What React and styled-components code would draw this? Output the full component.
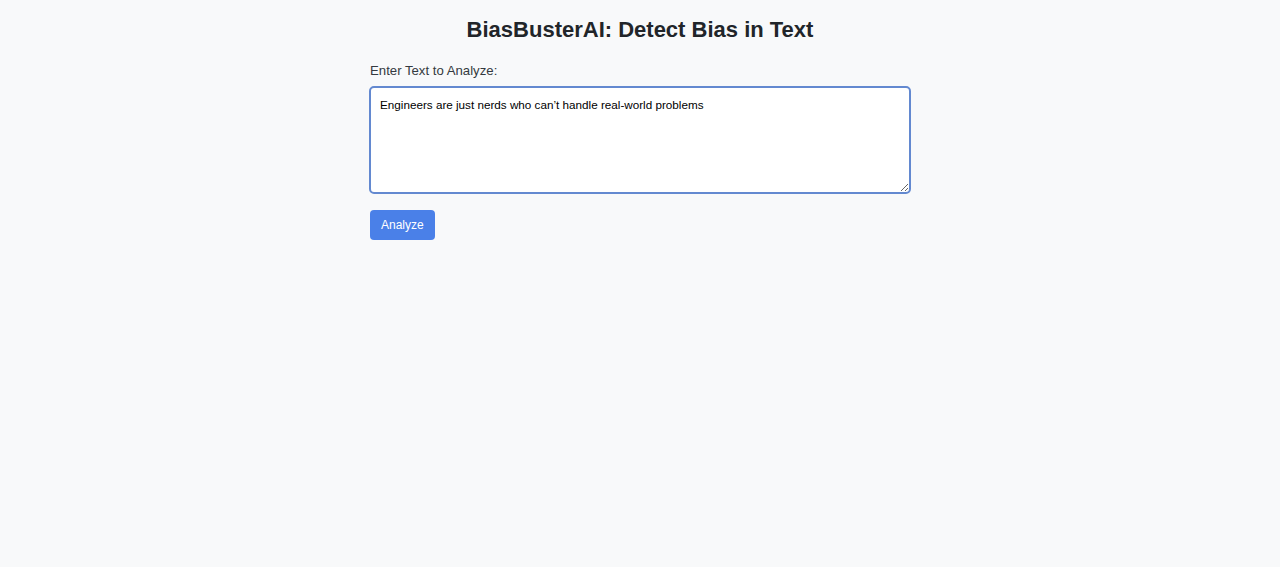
import React, { useState } from 'react';
import styled, { createGlobalStyle } from 'styled-components';

const GlobalStyle = createGlobalStyle`
    body {
        margin: 0;
        background: #f8f9fa;
        font-family: "Liberation Sans", Arial, sans-serif;
        color: #212529;
    }
`;

const Page = styled.div`
    display: flex;
    flex-direction: column;
    align-items: center;
    padding-top: 16px;
`;

const Title = styled.h1`
    margin: 0 0 19px;
    font-size: 22px;
    font-weight: bold;
    color: #212529;
    line-height: 28px;
`;

const Form = styled.div`
    width: 542px;
    display: flex;
    flex-direction: column;
    align-items: flex-start;
`;

const Label = styled.label`
    font-size: 13.2px;
    color: #343a40;
    margin-left: 1px;
    margin-bottom: 7px;
    line-height: 16px;
`;

const TextArea = styled.textarea`
    box-sizing: border-box;
    width: 542px;
    height: 108px;
    padding: 10px 9px;
    border: 2px solid #6389d0;
    border-radius: 5px;
    background: #fff;
    font-family: "Liberation Sans", Arial, sans-serif;
    font-size: 11.7px;
    color: #000;
    outline: none;
    resize: vertical;
`;

const Button = styled.button`
    margin-top: 16px;
    margin-left: 1px;
    padding: 0 11px;
    height: 30px;
    border: none;
    border-radius: 4px;
    background: ${props => (props.primary ? '#4a80e8' : '#6c757d')};
    color: #fff;
    font-family: "Liberation Sans", Arial, sans-serif;
    font-size: 12px;
    cursor: pointer;
`;

export default function App() {
    const [text, setText] = useState("Engineers are just nerds who can\u2019t handle real-world problems");

    return (
        <Page>
            <GlobalStyle />
            <Title>BiasBusterAI: Detect Bias in Text</Title>
            <Form>
                <Label htmlFor="input">Enter Text to Analyze:</Label>
                <TextArea id="input" value={text} onChange={e => setText(e.target.value)} />
                <Button primary>Analyze</Button>
            </Form>
        </Page>
    );
}
